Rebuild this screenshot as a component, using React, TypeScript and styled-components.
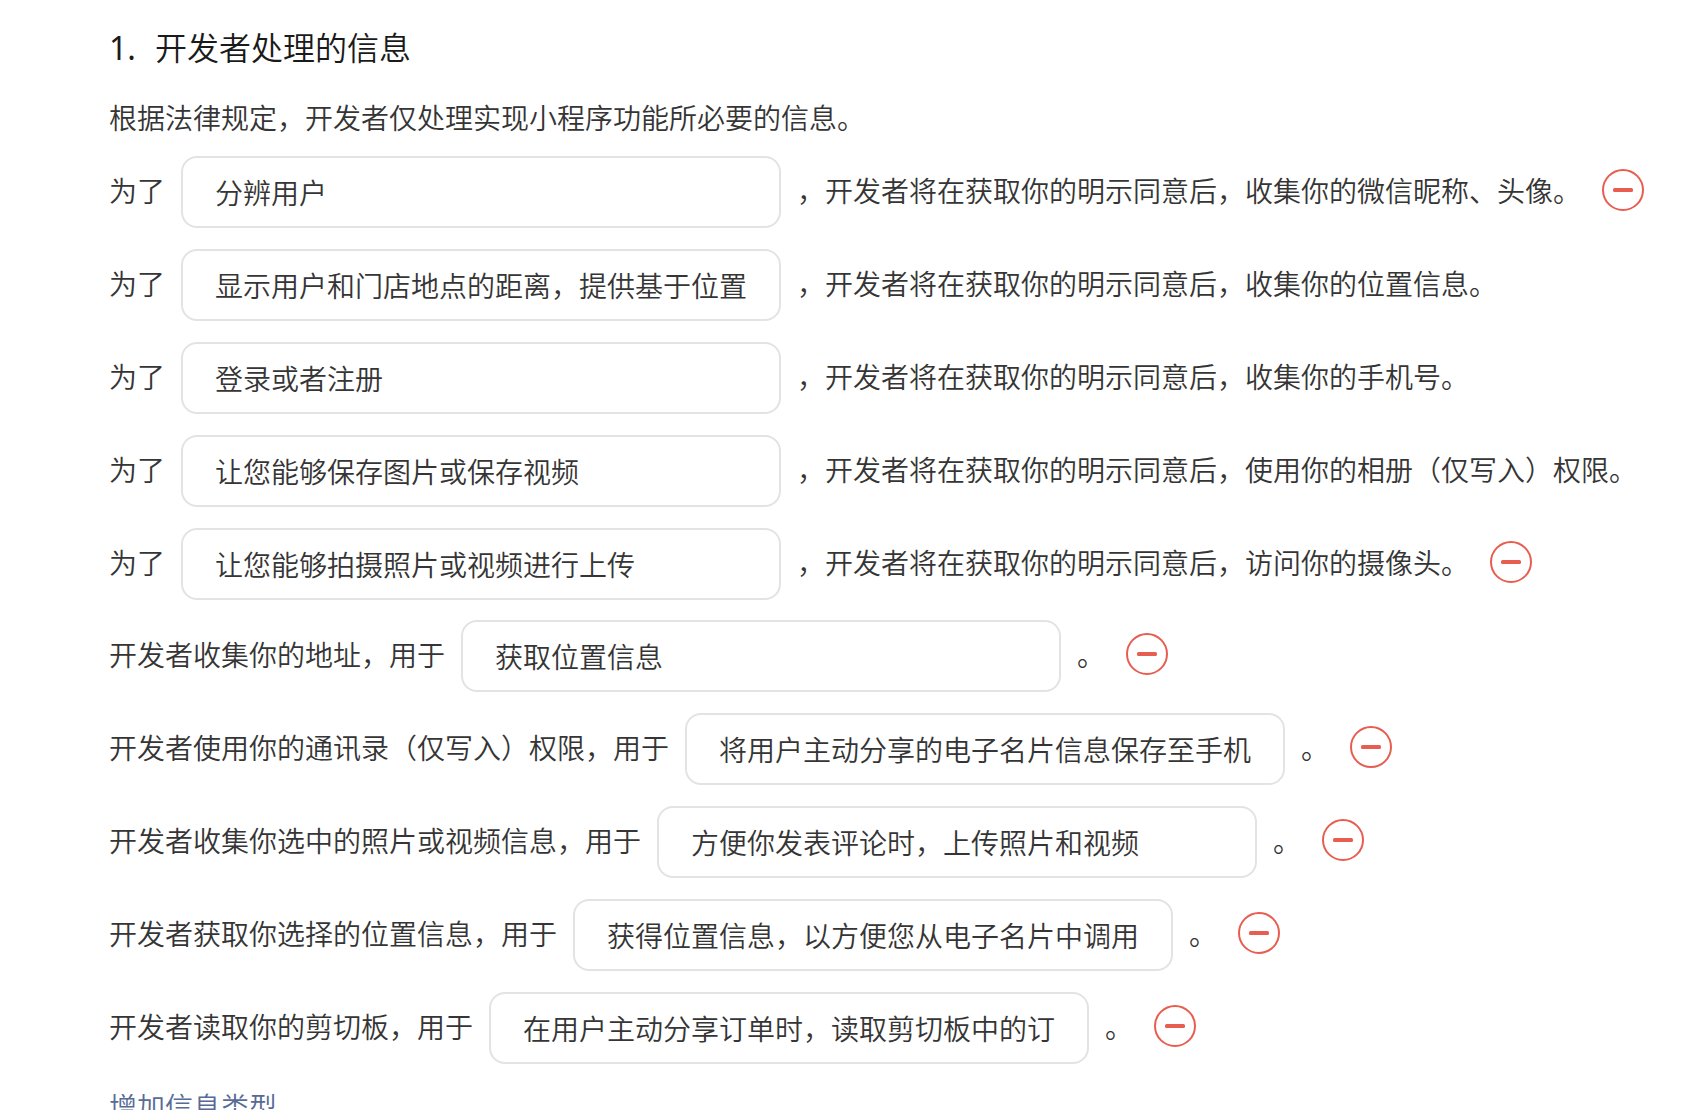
import React, { useState } from "react";
import styled, { createGlobalStyle } from "styled-components";

const GlobalStyle = createGlobalStyle`
  *, *::before, *::after { box-sizing: border-box; }
  body {
    margin: 0;
    background: #ffffff;
    color: #353535;
    font-family: "Noto Sans CJK SC", sans-serif;
    font-size: 28px;
    font-weight: 350;
  }
`;

const Page = styled.main`
  height: 100vh;
  overflow: hidden;
  padding: 22px 0 0 109px;
`;

const Heading = styled.h2`
  display: flex;
  align-items: baseline;
  gap: 19px;
  margin: 0;
  color: #1a1a1a;
  font-size: 32px;
  font-weight: 350;
  line-height: 48px;
`;

const HeadingNumber = styled.span`
  font-family: "Noto Sans", "Open Sans", sans-serif;
  font-weight: 400;
  line-height: 1;
`;

const Intro = styled.p`
  margin: 27px 0 19px;
  line-height: 40px;
`;

const ClauseList = styled.ul`
  display: flex;
  flex-direction: column;
  gap: 21px;
  margin: 0 0 20px;
  padding: 0;
  list-style: none;
`;

const Clause = styled.li`
  display: flex;
  align-items: flex-start;
  white-space: nowrap;
`;

const Lead = styled.label`
  margin-right: 16px;
  line-height: 68px;
`;

const Tail = styled.span`
  margin-left: 16px;
  line-height: 68px;
`;

const PurposeInput = styled.input`
  flex: none;
  width: 600px;
  height: 72px;
  padding: 0 32px;
  border: 2px solid #e3e3e3;
  border-radius: 16px;
  outline: none;
  background: #ffffff;
  color: inherit;
  font: inherit;

  &:focus {
    border-color: #576b95;
  }
`;

const RemoveButton = styled.button`
  display: flex;
  flex: none;
  margin: 13px 0 0 21px;
  padding: 0;
  border: 0;
  background: none;
  color: #e75e50;
  cursor: pointer;
`;

const AddLink = styled.a`
  display: inline-block;
  color: #576b95;
  line-height: 44px;
  text-decoration: none;
`;

type ClauseData = {
  id: string;
  lead: string;
  value: string;
  tail: string;
  removable?: boolean;
};

const CONSENT = "，开发者将在获取你的明示同意后，";

const consentClauses: ClauseData[] = [
  { id: "profile", lead: "为了", value: "分辨用户", tail: CONSENT + "收集你的微信昵称、头像。", removable: true },
  { id: "location", lead: "为了", value: "显示用户和门店地点的距离，提供基于位置", tail: CONSENT + "收集你的位置信息。" },
  { id: "phone", lead: "为了", value: "登录或者注册", tail: CONSENT + "收集你的手机号。" },
  { id: "album", lead: "为了", value: "让您能够保存图片或保存视频", tail: CONSENT + "使用你的相册（仅写入）权限。" },
  { id: "camera", lead: "为了", value: "让您能够拍摄照片或视频进行上传", tail: CONSENT + "访问你的摄像头。", removable: true },
];

const usageClauses: ClauseData[] = [
  { id: "address", lead: "开发者收集你的地址，用于", value: "获取位置信息", tail: "。", removable: true },
  { id: "contacts", lead: "开发者使用你的通讯录（仅写入）权限，用于", value: "将用户主动分享的电子名片信息保存至手机", tail: "。", removable: true },
  { id: "media", lead: "开发者收集你选中的照片或视频信息，用于", value: "方便你发表评论时，上传照片和视频", tail: "。", removable: true },
  { id: "place", lead: "开发者获取你选择的位置信息，用于", value: "获得位置信息，以方便您从电子名片中调用", tail: "。", removable: true },
  { id: "clipboard", lead: "开发者读取你的剪切板，用于", value: "在用户主动分享订单时，读取剪切板中的订", tail: "。", removable: true },
];

function MinusCircle() {
  return (
    <svg width="42" height="42" viewBox="0 0 42 42" fill="none" aria-hidden="true">
      <circle cx="21" cy="21" r="20" stroke="currentColor" strokeWidth="2" />
      <rect x="11" y="19" width="20" height="4" rx="1.5" fill="currentColor" />
    </svg>
  );
}

function Clauses({ initial }: { initial: ClauseData[] }) {
  const [items, setItems] = useState(initial);
  return (
    <ClauseList>
      {items.map((item) => (
        <Clause key={item.id}>
          <Lead htmlFor={item.id}>{item.lead}</Lead>
          <PurposeInput id={item.id} type="text" defaultValue={item.value} />
          <Tail>{item.tail}</Tail>
          {item.removable && (
            <RemoveButton
              type="button"
              aria-label="删除"
              onClick={() => setItems(items.filter((other) => other.id !== item.id))}
            >
              <MinusCircle />
            </RemoveButton>
          )}
        </Clause>
      ))}
    </ClauseList>
  );
}

export default function App() {
  return (
    <Page lang="zh-CN">
      <GlobalStyle />
      <Heading>
        <HeadingNumber>1.</HeadingNumber>
        开发者处理的信息
      </Heading>
      <Intro>根据法律规定，开发者仅处理实现小程序功能所必要的信息。</Intro>
      <Clauses initial={consentClauses} />
      <Clauses initial={usageClauses} />
      <AddLink href="#add">增加信息类型</AddLink>
    </Page>
  );
}
